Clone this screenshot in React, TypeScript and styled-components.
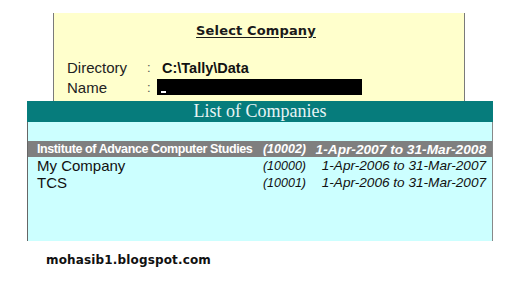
import React from "react";
import styled, { createGlobalStyle } from "styled-components";

const GlobalStyle = createGlobalStyle`
  html, body {
    margin: 0;
    padding: 0;
    background: #ffffff;
  }
  body {
    font-family: "Liberation Sans", Arial, sans-serif;
    color: #111;
  }
`;

type Company = {
  name: string;
  code: string;
  period: string;
  active?: boolean;
};

const companies: Company[] = [
  {
    name: "Institute of Advance Computer Studies",
    code: "(10002)",
    period: "1-Apr-2007 to 31-Mar-2008",
    active: true,
  },
  { name: "My Company", code: "(10000)", period: "1-Apr-2006 to 31-Mar-2007" },
  { name: "TCS", code: "(10001)", period: "1-Apr-2006 to 31-Mar-2007" },
];

const Page = styled.div`
  width: 521px;
  height: 281px;
  padding-top: 13px;
  box-sizing: border-box;
  overflow: hidden;
`;

const SelectBox = styled.div`
  margin-left: 53px;
  width: 412px;
  height: 88px;
  box-sizing: border-box;
  background: #ffffcc;
  border-left: 1px solid #7a7a7a;
  border-right: 1px solid #7a7a7a;
  padding-top: 10px;
`;

const Title = styled.div`
  text-align: center;
  font-family: "DejaVu Sans", Verdana, sans-serif;
  font-weight: bold;
  font-size: 13px;
  letter-spacing: 0.15px;
  line-height: 16px;
  text-decoration: underline;
  text-underline-offset: 2px;
  color: #1a1a1a;
  padding-right: 6px;
`;

const Fields = styled.div`
  margin-top: 19px;
  margin-left: 13px;
  display: grid;
  grid-template-columns: 80px 10px 1fr;
  grid-auto-rows: 20px;
  font-size: 15px;
  line-height: 20px;
  color: #222;
`;

const Colon = styled.span`
  font-size: 13px;
  color: #555;
`;

const Value = styled.span`
  font-weight: bold;
  font-size: 14.5px;
  padding-left: 5px;
  color: #111;
`;

const NameInput = styled.div`
  margin-top: 1px;
  width: 205px;
  height: 16px;
  background: #000;
  position: relative;
`;

const Cursor = styled.span`
  position: absolute;
  left: 4px;
  bottom: 2px;
  width: 5px;
  height: 2px;
  background: #fff;
`;

const ListPanel = styled.div`
  margin-left: 27px;
  width: 466px;
`;

const ListHeader = styled.div`
  height: 21px;
  background: #067c7c;
  color: #e8f4f4;
  font-family: "Liberation Serif", "Times New Roman", serif;
  font-size: 18px;
  line-height: 20px;
  text-align: center;
`;

const ListBody = styled.div`
  height: 119px;
  box-sizing: border-box;
  background: #ccffff;
  border-left: 1px solid #666;
  border-right: 1px solid #888;
  padding-top: 19px;
`;

const Row = styled.div<{ $active?: boolean }>`
  display: grid;
  grid-template-columns: 1fr 50px 180px;
  align-items: center;
  height: ${(p) => (p.$active ? "16px" : "17px")};
  padding: 0 6px 0 9px;
  background: ${(p) => (p.$active ? "#7f7f7f" : "transparent")};
  color: ${(p) => (p.$active ? "#ffffff" : "#111")};
  font-weight: ${(p) => (p.$active ? "bold" : "normal")};
  white-space: nowrap;
`;

const Name = styled.span<{ $active?: boolean }>`
  font-size: ${(p) => (p.$active ? "12.5px" : "15px")};
  letter-spacing: ${(p) => (p.$active ? "-0.4px" : "0")};
`;

const Code = styled.span`
  text-align: right;
  font-style: italic;
  font-size: 12.5px;
`;

const Period = styled.span<{ $active?: boolean }>`
  text-align: right;
  font-style: italic;
  font-size: ${(p) => (p.$active ? "13.7px" : "13.6px")};
`;

const Footer = styled.div`
  margin-top: 12px;
  margin-left: 46px;
  font-family: "DejaVu Sans", Verdana, sans-serif;
  font-weight: bold;
  font-size: 12px;
  letter-spacing: 0.15px;
  color: #111;
`;

export default function App() {
  return (
    <>
      <GlobalStyle />
      <Page>
        <SelectBox>
          <Title>Select Company</Title>
          <Fields>
            <span>Directory</span>
            <Colon>:</Colon>
            <Value>C:\Tally\Data</Value>
            <span>Name</span>
            <Colon>:</Colon>
            <NameInput>
              <Cursor />
            </NameInput>
          </Fields>
        </SelectBox>
        <ListPanel>
          <ListHeader>List of Companies</ListHeader>
          <ListBody>
            {companies.map((c) => (
              <Row key={c.code} $active={c.active}>
                <Name $active={c.active}>{c.name}</Name>
                <Code>{c.code}</Code>
                <Period $active={c.active}>{c.period}</Period>
              </Row>
            ))}
          </ListBody>
        </ListPanel>
        <Footer>mohasib1.blogspot.com</Footer>
      </Page>
    </>
  );
}
